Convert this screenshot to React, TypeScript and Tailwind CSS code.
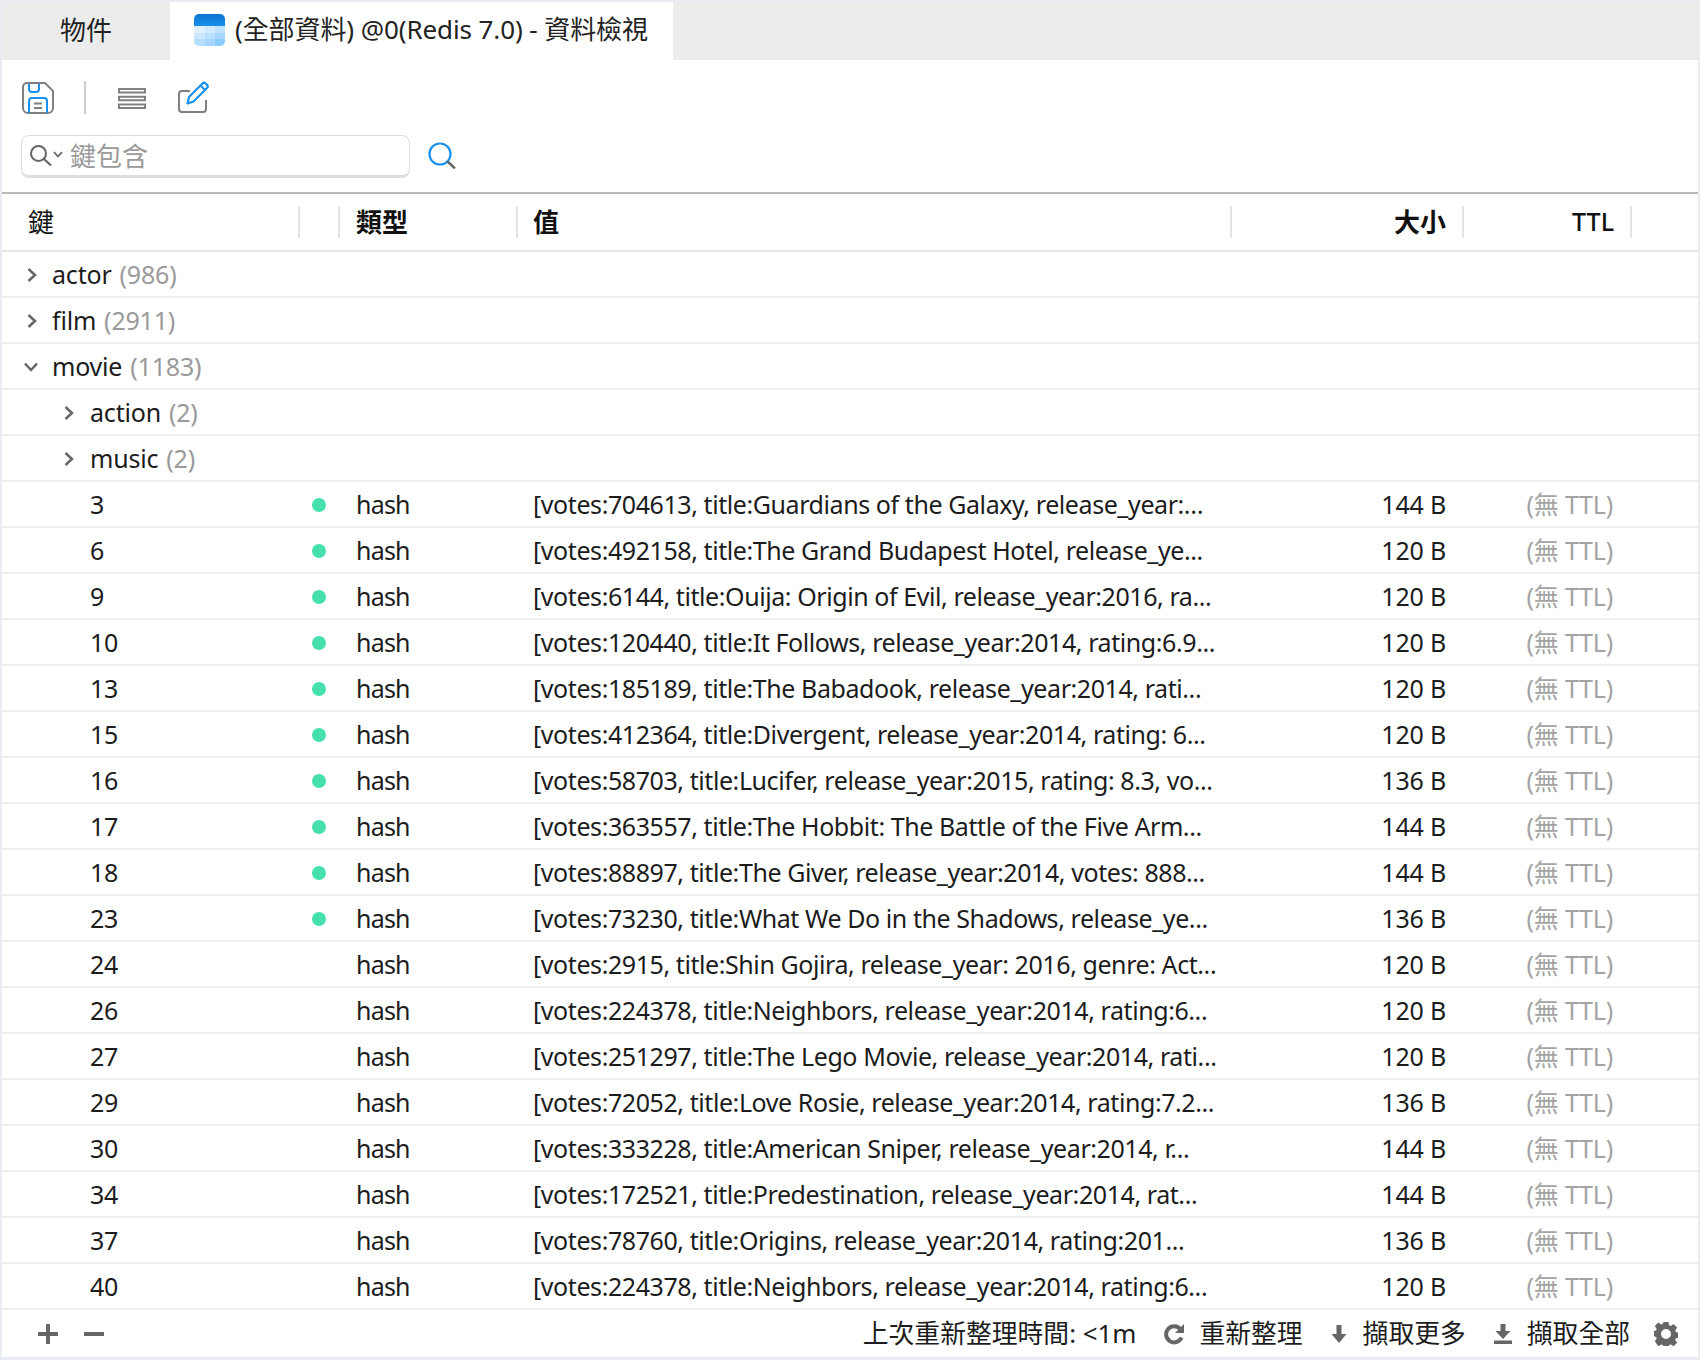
const cjk = "font-['Noto_Sans','Noto_Sans_CJK_TC',sans-serif]";

const folders = [
  { name: "actor", count: 986, open: false, sub: false },
  { name: "film", count: 2911, open: false, sub: false },
  { name: "movie", count: 1183, open: true, sub: false },
  { name: "action", count: 2, open: false, sub: true },
  { name: "music", count: 2, open: false, sub: true },
];

const rows = [
  ["3", true, "[votes:704613, title:Guardians of the Galaxy, release_year:…", "144 B"],
  ["6", true, "[votes:492158, title:The Grand Budapest Hotel, release_ye...", "120 B"],
  ["9", true, "[votes:6144, title:Ouija: Origin of Evil, release_year:2016, ra...", "120 B"],
  ["10", true, "[votes:120440, title:It Follows, release_year:2014, rating:6.9...", "120 B"],
  ["13", true, "[votes:185189, title:The Babadook, release_year:2014, rati...", "120 B"],
  ["15", true, "[votes:412364, title:Divergent, release_year:2014, rating: 6...", "120 B"],
  ["16", true, "[votes:58703, title:Lucifer, release_year:2015, rating: 8.3, vo...", "136 B"],
  ["17", true, "[votes:363557, title:The Hobbit: The Battle of the Five Arm...", "144 B"],
  ["18", true, "[votes:88897, title:The Giver, release_year:2014, votes: 888...", "144 B"],
  ["23", true, "[votes:73230, title:What We Do in the Shadows, release_ye...", "136 B"],
  ["24", false, "[votes:2915, title:Shin Gojira, release_year: 2016, genre: Act...", "120 B"],
  ["26", false, "[votes:224378, title:Neighbors, release_year:2014, rating:6...", "120 B"],
  ["27", false, "[votes:251297, title:The Lego Movie, release_year:2014, rati...", "120 B"],
  ["29", false, "[votes:72052, title:Love Rosie, release_year:2014, rating:7.2...", "136 B"],
  ["30", false, "[votes:333228, title:American Sniper, release_year:2014, r...", "144 B"],
  ["34", false, "[votes:172521, title:Predestination, release_year:2014, rat...", "144 B"],
  ["37", false, "[votes:78760, title:Origins, release_year:2014, rating:201...", "136 B"],
  ["40", false, "[votes:224378, title:Neighbors, release_year:2014, rating:6...", "120 B"],
] as const;

function TabIcon() {
  return (
    <svg width="31" height="32" viewBox="0 0 31 32" className="shrink-0">
      <defs>
        <clipPath id="tabclip">
          <rect width="31" height="32" rx="5" />
        </clipPath>
        <linearGradient id="tabbar" x1="0" y1="0" x2="0" y2="1">
          <stop offset="0" stopColor="#0b73d0" />
          <stop offset="1" stopColor="#1a90ee" />
        </linearGradient>
      </defs>
      <g clipPath="url(#tabclip)">
        <rect width="31" height="12" fill="url(#tabbar)" />
        <rect y="12" width="11" height="7" fill="#dff0ff" />
        <rect x="11" y="12" width="10" height="7" fill="#d2e9ff" />
        <rect x="21" y="12" width="10" height="7" fill="#c0e1ff" />
        <rect y="19" width="11" height="6" fill="#cfe7ff" />
        <rect x="11" y="19" width="10" height="6" fill="#bbdfff" />
        <rect x="21" y="19" width="10" height="6" fill="#a4d6ff" />
        <rect y="25" width="11" height="7" fill="#b8deff" />
        <rect x="11" y="25" width="10" height="7" fill="#a5d5ff" />
        <rect x="21" y="25" width="10" height="7" fill="#8acbff" />
      </g>
    </svg>
  );
}

function SaveIcon() {
  return (
    <svg width="32" height="32" viewBox="0 0 32 32" fill="none" className="shrink-0">
      <path d="M5 1H23L31 9V26a5 5 0 0 1-5 5H6a5 5 0 0 1-5-5V5a4 4 0 0 1 4-4Z" stroke="#808080" strokeWidth="2" />
      <path d="M7 2V7a3 3 0 0 0 3 3H14a3 3 0 0 0 3-3V2" stroke="#1890f0" strokeWidth="2" />
      <path d="M7 31V19a3 3 0 0 1 3-3H22a3 3 0 0 1 3 3V31" stroke="#1890f0" strokeWidth="2" />
      <path d="M12 21.500H20M12 26H20" stroke="#808080" strokeWidth="2" />
    </svg>
  );
}

function ListIcon() {
  return (
    <svg width="28" height="21" viewBox="0 0 28 21" fill="none" className="shrink-0">
      <rect x="1" y="1" width="26" height="3.500" stroke="#808080" strokeWidth="2" />
      <rect x="1" y="8.750" width="26" height="3.500" stroke="#808080" strokeWidth="2" />
      <rect x="1" y="16.500" width="26" height="3.500" stroke="#808080" strokeWidth="2" />
    </svg>
  );
}

function EditIcon() {
  return (
    <svg width="31" height="32" viewBox="0 0 31 32" fill="none" className="shrink-0">
      <path d="M12 10H4a3 3 0 0 0-3 3V28a3 3 0 0 0 3 3H25a3 3 0 0 0 3-3V19" stroke="#808080" strokeWidth="2" />
      <path d="M9.500 22.500L11 16L24.500 2.500a2.200 2.200 0 0 1 3.100 0L29 3.900a2.200 2.200 0 0 1 0 3.100L15.500 20.500Z" stroke="#1890f0" strokeWidth="2.200" strokeLinejoin="round" />
      <path d="M22.500 4.500L27 9" stroke="#1890f0" strokeWidth="2" />
    </svg>
  );
}

function Chevron({ open }: { open: boolean }) {
  return open ? (
    <svg width="14" height="10" viewBox="0 0 14 10" fill="none" className="shrink-0">
      <path d="M1 1.500L7 8L13 1.500" stroke="#666" strokeWidth="2.500" />
    </svg>
  ) : (
    <svg width="10" height="14" viewBox="0 0 10 14" fill="none" className="shrink-0">
      <path d="M1.500 1L8 7L1.500 13" stroke="#666" strokeWidth="2.500" />
    </svg>
  );
}

function Footer() {
  return (
    <div className="h-[47px] shrink-0 flex items-center text-[25.8px] text-[#1c1c1c] whitespace-nowrap">
      <svg width="20" height="22" viewBox="0 0 20 22" className="ml-[36px] shrink-0">
        <path d="M10 1V21M0 11H20" stroke="#666" strokeWidth="4" />
      </svg>
      <svg width="20" height="22" viewBox="0 0 20 22" className="ml-[26px] shrink-0">
        <path d="M0 11H20" stroke="#666" strokeWidth="4" />
      </svg>
      <div className="ml-auto flex items-center">
        <span>上次重新整理時間: &lt;1m</span>
        <svg width="22" height="22" viewBox="0 0 22 22" fill="none" className="ml-[27px] shrink-0">
          <path d="M17.500 6.500A8 8 0 1 0 18.500 14.500" stroke="#666" strokeWidth="4" />
          <path d="M21 1V10H12Z" fill="#666" />
        </svg>
        <span className="ml-[14px]">重新整理</span>
        <svg width="16" height="20" viewBox="0 0 16 20" className="ml-[28px] shrink-0">
          <path d="M5.500 1H10.500V10H15.500L8 19L0.500 10H5.500Z" fill="#666" />
        </svg>
        <span className="ml-[16px]">擷取更多</span>
        <svg width="18" height="20" viewBox="0 0 18 20" className="ml-[28px] shrink-0">
          <path d="M6.500 0H11.500V7H16.500L9 15L1.500 7H6.500ZM0 16.500H18V20H0Z" fill="#666" />
        </svg>
        <span className="ml-[15px]">擷取全部</span>
        <svg width="24" height="24" viewBox="0 0 24 24" className="ml-[24px] mr-[20px] shrink-0">
          <path
            fillRule="evenodd"
            fill="#666"
            d="M9.500 0h5l.6 3.300 1.700.7 2.800-1.900 3.500 3.500-1.900 2.800.7 1.700 3.100.6v5l-3.100.6-.7 1.700 1.900 2.800-3.500 3.500-2.800-1.900-1.700.7-.6 3.100h-5l-.6-3.100-1.700-.7-2.800 1.900L.800 19.300l1.900-2.800-.7-1.700L-1 14.200v-5l3-.6.700-1.700L.800 4.100 4.300 .600l2.800 1.900 1.800-.7ZM12 7a5 5 0 1 0 0 10 5 5 0 0 0 0-10Z"
          />
        </svg>
      </div>
    </div>
  );
}

export default function App() {
  return (
    <div className={`w-[1700px] h-[1360px] overflow-hidden bg-[#e9ecf0] px-[2px] pt-[2px] pb-[3px] ${cjk}`}>
      <div className="h-full flex flex-col bg-white">
        {/* tabs */}
        <div className="h-[58px] flex shrink-0 bg-[#ececec]">
          <div className="w-[167px] flex items-center justify-center pl-[1px] pb-[1px] text-[26px] text-[#222]">物件</div>
          <div className="w-[503px] ml-[1px] bg-white flex items-center pl-[24px] pb-[3px] gap-[10px] text-[26px] tracking-[-0.1px] text-[#222] whitespace-nowrap">
            <TabIcon />
            <span>(全部資料) @0(Redis 7.0) - 資料檢視</span>
          </div>
        </div>

        {/* toolbar */}
        <div className="h-[134px] shrink-0 border-b-[2px] border-[#b9b9b9] flex flex-col">
          <div className="flex items-center pl-[20px] mt-[21px] h-[33px]">
            <SaveIcon />
            <div className="w-[2px] h-[33px] bg-[#cccccc] ml-[30px]" />
            <div className="ml-[32px] mt-[1px]"><ListIcon /></div>
            <div className="ml-[32px] -mt-[1px]"><EditIcon /></div>
          </div>
          <div className="flex items-center pl-[19px] mt-[21px]">
            <div className="w-[389px] h-[43px] rounded-[8px] border-[1.5px] border-[#dedede] border-b-[3px] flex items-center pl-[8px] text-[26px] text-[#9a9a9a]">
              <svg width="22" height="21" viewBox="0 0 22 21" fill="none" className="shrink-0">
                <circle cx="8.500" cy="8.500" r="7.500" stroke="#666" strokeWidth="2" />
                <path d="M14 14L21 20.500" stroke="#666" strokeWidth="2.200" />
              </svg>
              <svg width="10" height="7" viewBox="0 0 10 7" fill="none" className="ml-[1px] -mt-[3px] shrink-0">
                <path d="M1 1L5 5.500L9 1" stroke="#666" strokeWidth="1.800" />
              </svg>
              <span className="ml-[7px] pt-[2px]">鍵包含</span>
            </div>
            <svg width="28" height="27" viewBox="0 0 28 27" fill="none" className="ml-[18px] -mt-[3px] shrink-0">
              <circle cx="12" cy="12" r="10.500" stroke="#1890f0" strokeWidth="2.200" />
              <path d="M19.500 19.500L27 26.500" stroke="#666" strokeWidth="2.400" />
            </svg>
          </div>
        </div>

        {/* column headers */}
        <div className="h-[58px] shrink-0 border-b-[2px] border-[#e6e6e6] flex items-center text-[26px] text-[#111]">
          <div className="w-[298px] h-[32px] flex items-center pl-[26px] border-r-[2px] border-[#e4e4e4]">鍵</div>
          <div className="w-[40px] h-[32px] border-r-[2px] border-[#e4e4e4]" />
          <div className="w-[178px] h-[32px] flex items-center pl-[16px] border-r-[2px] border-[#e4e4e4] font-bold">類型</div>
          <div className="w-[714px] h-[32px] flex items-center pl-[15px] border-r-[2px] border-[#e4e4e4] font-bold">值</div>
          <div className="w-[232px] h-[32px] flex items-center justify-end pr-[16px] border-r-[2px] border-[#e4e4e4] font-semibold">大小</div>
          <div className="w-[168px] h-[32px] flex items-center justify-end pr-[16px] border-r-[2px] border-[#e4e4e4] text-[25px] font-medium">TTL</div>
        </div>

        {/* rows */}
        <div className="flex-1 min-h-0 text-[25px] text-[#1c1c1c] tracking-[-0.2px]">
          {folders.map((f) => (
            <div key={f.name} className="h-[46px] pt-[2px] border-b-[2px] border-[#eeeeee] flex items-center whitespace-nowrap">
              <div className={`flex justify-center ${f.sub ? "w-[88px] pl-[46px]" : f.open ? "w-[50px] pl-[7px]" : "w-[50px] pl-[10px]"}`}>
                <Chevron open={f.open} />
              </div>
              <span>{f.name}</span>
              <span className="ml-[8px] text-[#9a9a9a]">({f.count})</span>
            </div>
          ))}
          {rows.map(([key, hot, value, size], i) => (
            <div key={i} className="h-[46px] pt-[2px] border-b-[2px] border-[#eeeeee] flex items-center whitespace-nowrap">
              <div className="w-[298px] pl-[88px]">{key}</div>
              <div className="w-[40px] flex">
                {hot && <div className="w-[14px] h-[14px] rounded-full bg-[#46e0ae] ml-[12px]" />}
              </div>
              <div className="w-[178px] pl-[16px] tracking-[-0.8px]">hash</div>
              <div className="w-[714px] pl-[15px] tracking-[-0.42px]">{value}</div>
              <div className="w-[232px] pr-[18px] text-right">{size}</div>
              <div className="w-[168px] pr-[19px] text-right text-[#a3a3a3]">(無 TTL)</div>
            </div>
          ))}
        </div>

        <Footer />
      </div>
    </div>
  );
}
